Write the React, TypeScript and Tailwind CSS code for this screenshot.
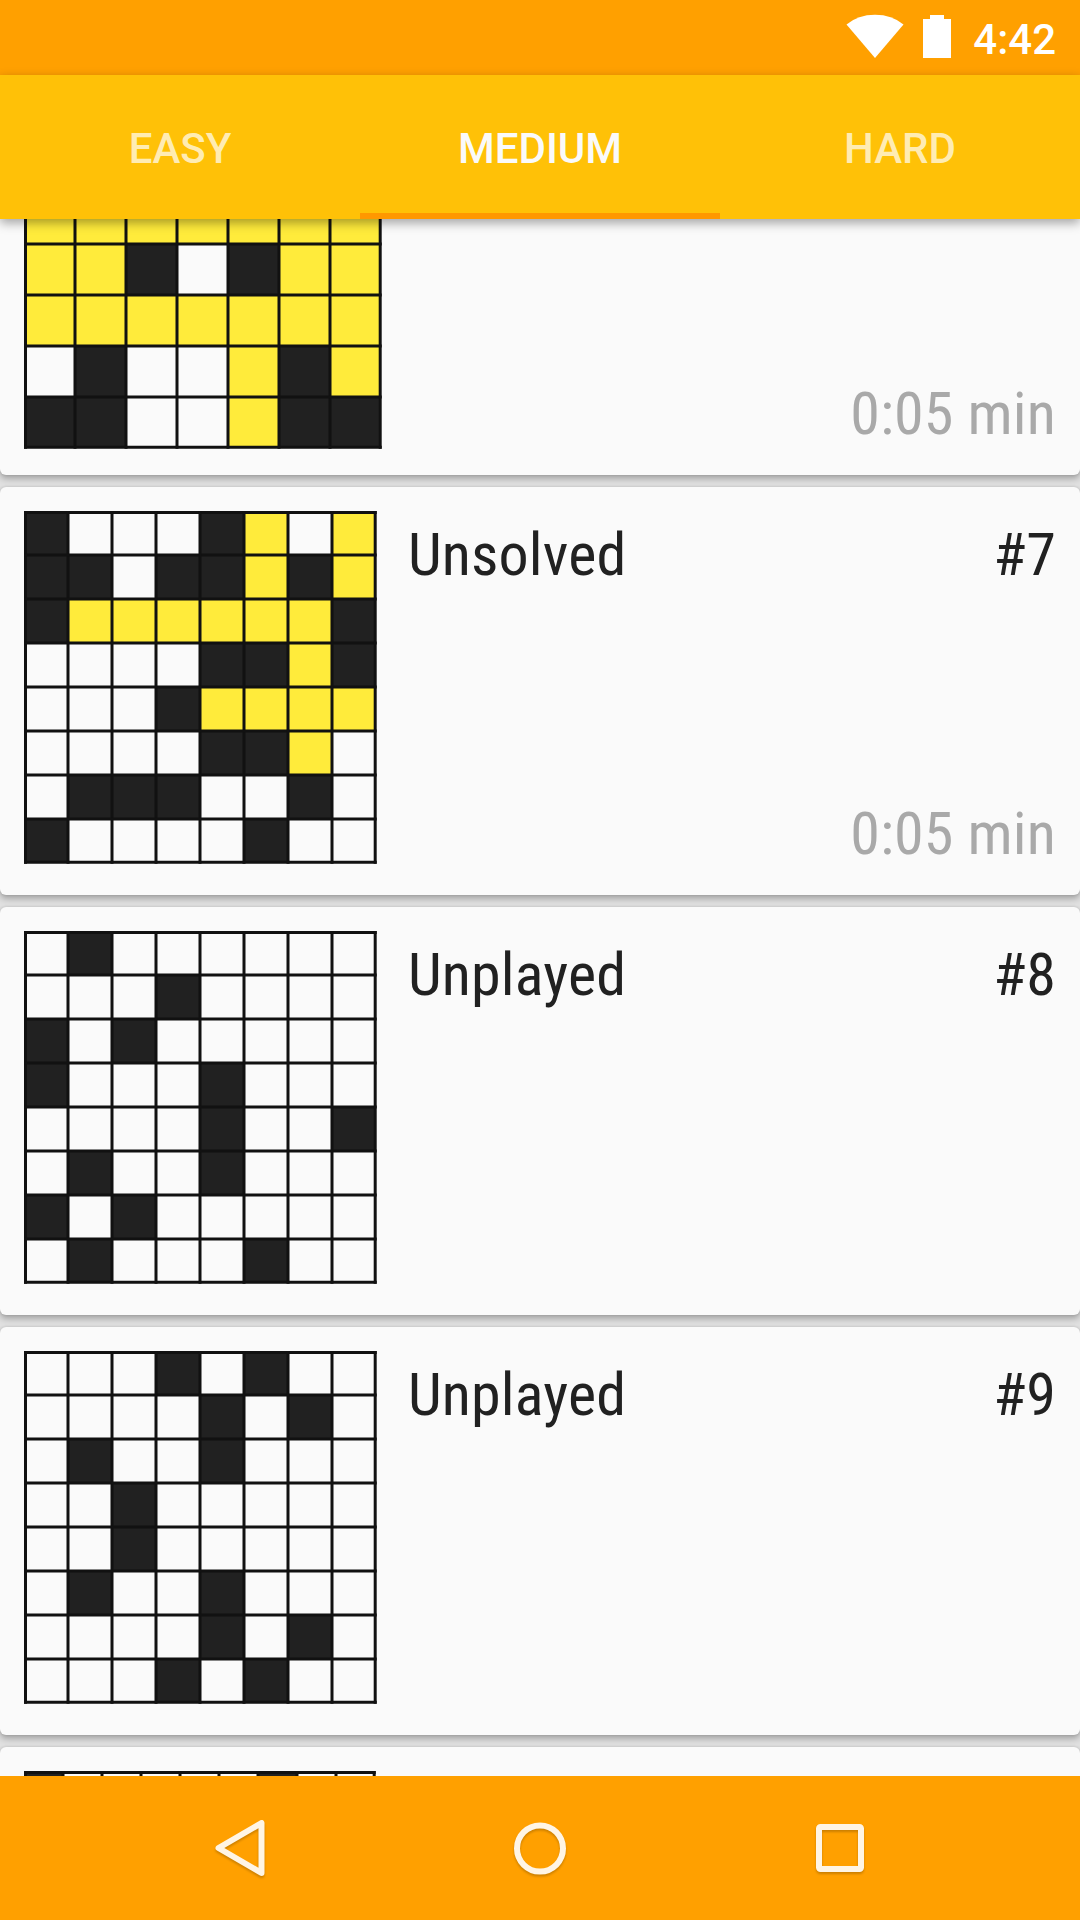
const tabs = ["EASY", "MEDIUM", "HARD"];

type Puzzle = {
  id: number;
  status?: string;
  time?: string;
  rows: string[];
};

// # = wall, y = lit cell, . = empty cell
const puzzles: Puzzle[] = [
  {
    id: 6,
    time: "0:05 min",
    rows: [
      "yyyyyyy",
      "yyyyyyy",
      "yyyyyyy",
      "yy#.#yy",
      "yyyyyyy",
      ".#..y#y",
      "##..y##",
    ],
  },
  {
    id: 7,
    status: "Unsolved",
    time: "0:05 min",
    rows: [
      "#...#y.y",
      "##.##y#y",
      "#yyyyyy#",
      "....##y#",
      "...#yyyy",
      "....##y.",
      ".###..#.",
      "#....#..",
    ],
  },
  {
    id: 8,
    status: "Unplayed",
    rows: [
      ".#......",
      "...#....",
      "#.#.....",
      "#...#...",
      "....#..#",
      ".#..#...",
      "#.#.....",
      ".#...#..",
    ],
  },
  {
    id: 9,
    status: "Unplayed",
    rows: [
      "...#.#..",
      "....#.#.",
      ".#..#...",
      "..#.....",
      "..#.....",
      ".#..#...",
      "....#.#.",
      "...#.#..",
    ],
  },
  {
    id: 10,
    rows: [
      "#.....#..",
      ".........",
      ".........",
      ".........",
      ".........",
      ".........",
      ".........",
      ".........",
      ".........",
    ],
  },
];

function Board({ rows }: { rows: string[] }) {
  const n = rows.length;
  const cell = Math.floor(358 / n);
  const size = cell * n;

  // outer lines are kept inside the board
  const linePos = (i: number) => {
    if (i === 0) return 1.5;
    if (i === n) return size - 0.8;
    return i * cell;
  };
  const lines = Array.from({ length: n + 1 }, (_, i) => linePos(i));

  return (
    <svg width={size + 1} height={size + 1} className="block shrink-0">
      {rows.map((row, y) =>
        row.split("").map((c, x) =>
          c === "." ? null : (
            <rect
              key={`${x}-${y}`}
              x={x * cell}
              y={y * cell}
              width={cell}
              height={cell}
              fill={c === "#" ? "#212121" : "#ffeb3b"}
            />
          )
        )
      )}
      {lines.map((p) => (
        <g key={p} stroke="#111111" strokeWidth={3}>
          <line x1={p} y1={0} x2={p} y2={size + 0.7} />
          <line x1={0} y1={p} x2={size + 0.7} y2={p} />
        </g>
      ))}
    </svg>
  );
}

function PuzzleCard({ puzzle }: { puzzle: Puzzle }) {
  return (
    <div className="flex h-[408px] shrink-0 rounded-[6px] bg-[#fafafa] p-6 shadow-[0_4px_6px_rgba(0,0,0,0.25),0_0_3px_rgba(0,0,0,0.15)]">
      <Board rows={puzzle.rows} />
      <div className="flex grow flex-col text-[60px] leading-[70px] tracking-[0.15px] font-['Roboto_Condensed','Roboto',sans-serif] font-stretch-condensed">
        {puzzle.status && (
          <div className="flex justify-between pt-[9px] text-[#212121]">
            <span className="ml-[31px]">{puzzle.status}</span>
            <span>#{puzzle.id}</span>
          </div>
        )}
        {puzzle.time && (
          <div className="mt-auto mb-[2px] text-right text-[#a9a9a9]">
            {puzzle.time}
          </div>
        )}
      </div>
    </div>
  );
}

function StatusBar() {
  return (
    <div className="flex h-[75px] shrink-0 items-start justify-end bg-[#ffa000] pr-[24px] text-white">
      <svg width="58" height="60" viewBox="0 0 58 60" className="mr-[19px]">
        <path d="M0.5 24.5 Q12 14.7 29 14.7 Q46 14.7 57.5 24.5 L29 58Z" fill="currentColor" />
      </svg>
      <svg width="28" height="60" viewBox="0 0 28 60" className="mr-[22px]">
        <path d="M7 15H21V19H28V58H0V19H7Z" fill="currentColor" />
      </svg>
      <span className="pt-[15px] text-[42px] leading-[50px] font-medium">
        4:42
      </span>
    </div>
  );
}

function NavBar() {
  return (
    <div className="relative z-10 flex h-[144px] shrink-0 items-center justify-center bg-[#ffa000]">
      <svg
        width="720"
        height="144"
        viewBox="180 1776 720 144"
        fill="none"
        stroke="#fff5e5"
        strokeWidth="6"
        strokeLinejoin="round"
        className="drop-shadow-[0_2px_1px_rgba(0,0,0,0.2)]"
      >
        <path d="M218.5 1848 L261.5 1823 V1873Z" />
        <circle cx="540" cy="1848.5" r="23" />
        <rect x="819" y="1827" width="42" height="42" rx="1.5" />
      </svg>
    </div>
  );
}

export default function App() {
  return (
    <div className="flex h-[1920px] w-[1080px] flex-col overflow-hidden bg-[#e0e0e0] font-['Roboto',sans-serif]">
      <StatusBar />
      <div className="relative z-10 grid h-[144px] shrink-0 grid-cols-3 bg-[#ffc107] shadow-[0_4px_10px_rgba(0,0,0,0.35)]">
        {tabs.map((tab) => (
          <div
            key={tab}
            className={
              tab === "MEDIUM"
                ? "border-b-6 border-[#ff9800] pt-[49px] text-center text-[42px] leading-[50px] font-medium text-[#fafafa]"
                : "pt-[49px] text-center text-[42px] leading-[50px] font-medium text-[#ffecb3]"
            }
          >
            {tab}
          </div>
        ))}
      </div>
      {/* the list is scrolled, so the first card sits partly under the tabs */}
      <div className="flex min-h-0 grow flex-col overflow-hidden">
        <div className="mt-[-152px] flex flex-col gap-3">
          {puzzles.map((puzzle) => (
            <PuzzleCard key={puzzle.id} puzzle={puzzle} />
          ))}
        </div>
      </div>
      <NavBar />
    </div>
  );
}
